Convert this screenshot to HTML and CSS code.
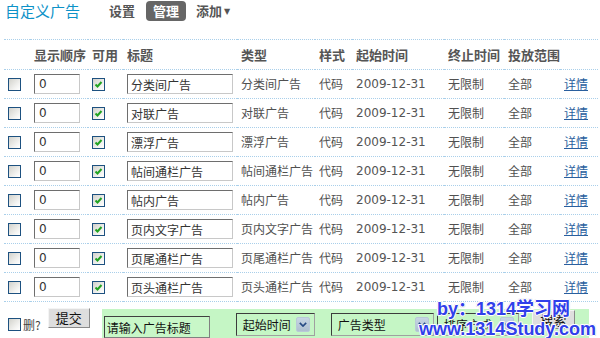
FILE: index.html
```html
<!DOCTYPE html>
<html lang="zh-CN">
<head>
<meta charset="utf-8">
<title>自定义广告</title>
<link rel="stylesheet" href="styles.css">
</head>
<body>
<div class="page">
  <div class="topbar">
    <h1 class="title">自定义广告</h1>
    <nav class="tabs">
      <a class="tab">设置</a>
      <a class="tab active">管理</a>
      <a class="tab">添加<span class="caret">▼</span></a>
    </nav>
  </div>

  <table class="grid">
    <colgroup>
      <col class="c1"><col class="c2"><col class="c3"><col class="c4"><col class="c5">
      <col class="c6"><col class="c7"><col class="c8"><col class="c9"><col class="c10">
    </colgroup>
    <thead>
      <tr><th></th><th>显示顺序</th><th>可用</th><th>标题</th><th>类型</th><th>样式</th><th>起始时间</th><th>终止时间</th><th>投放范围</th><th></th></tr>
    </thead>
    <tbody>
      <tr><td><span class="cb"></span></td><td><input class="num" value="0"></td><td><span class="cb on"><svg viewBox="0 0 11 11"><path d="M2.5 5.5 L4.5 7.5 L8.5 3"/></svg></span></td><td><input class="name" value="分类间广告"></td><td>分类间广告</td><td>代码</td><td class="date">2009-12-31</td><td>无限制</td><td>全部</td><td><a class="more">详情</a></td></tr>
      <tr><td><span class="cb"></span></td><td><input class="num" value="0"></td><td><span class="cb on"><svg viewBox="0 0 11 11"><path d="M2.5 5.5 L4.5 7.5 L8.5 3"/></svg></span></td><td><input class="name" value="对联广告"></td><td>对联广告</td><td>代码</td><td class="date">2009-12-31</td><td>无限制</td><td>全部</td><td><a class="more">详情</a></td></tr>
      <tr><td><span class="cb"></span></td><td><input class="num" value="0"></td><td><span class="cb on"><svg viewBox="0 0 11 11"><path d="M2.5 5.5 L4.5 7.5 L8.5 3"/></svg></span></td><td><input class="name" value="漂浮广告"></td><td>漂浮广告</td><td>代码</td><td class="date">2009-12-31</td><td>无限制</td><td>全部</td><td><a class="more">详情</a></td></tr>
      <tr><td><span class="cb"></span></td><td><input class="num" value="0"></td><td><span class="cb on"><svg viewBox="0 0 11 11"><path d="M2.5 5.5 L4.5 7.5 L8.5 3"/></svg></span></td><td><input class="name" value="帖间通栏广告"></td><td>帖间通栏广告</td><td>代码</td><td class="date">2009-12-31</td><td>无限制</td><td>全部</td><td><a class="more">详情</a></td></tr>
      <tr><td><span class="cb"></span></td><td><input class="num" value="0"></td><td><span class="cb on"><svg viewBox="0 0 11 11"><path d="M2.5 5.5 L4.5 7.5 L8.5 3"/></svg></span></td><td><input class="name" value="帖内广告"></td><td>帖内广告</td><td>代码</td><td class="date">2009-12-31</td><td>无限制</td><td>全部</td><td><a class="more">详情</a></td></tr>
      <tr><td><span class="cb"></span></td><td><input class="num" value="0"></td><td><span class="cb on"><svg viewBox="0 0 11 11"><path d="M2.5 5.5 L4.5 7.5 L8.5 3"/></svg></span></td><td><input class="name" value="页内文字广告"></td><td>页内文字广告</td><td>代码</td><td class="date">2009-12-31</td><td>无限制</td><td>全部</td><td><a class="more">详情</a></td></tr>
      <tr><td><span class="cb"></span></td><td><input class="num" value="0"></td><td><span class="cb on"><svg viewBox="0 0 11 11"><path d="M2.5 5.5 L4.5 7.5 L8.5 3"/></svg></span></td><td><input class="name" value="页尾通栏广告"></td><td>页尾通栏广告</td><td>代码</td><td class="date">2009-12-31</td><td>无限制</td><td>全部</td><td><a class="more">详情</a></td></tr>
      <tr><td><span class="cb"></span></td><td><input class="num" value="0"></td><td><span class="cb on"><svg viewBox="0 0 11 11"><path d="M2.5 5.5 L4.5 7.5 L8.5 3"/></svg></span></td><td><input class="name" value="页头通栏广告"></td><td>页头通栏广告</td><td>代码</td><td class="date">2009-12-31</td><td>无限制</td><td>全部</td><td><a class="more">详情</a></td></tr>
    </tbody>
  </table>

  <div class="footer">
    <label class="del"><span class="cb"></span>删?</label>
    <button class="btn submit">提交</button>
    <div class="search">
      <input class="kw" value="请输入广告标题">
      <div class="sel s1"><span>起始时间</span><i class="drop"><svg viewBox="0 0 10 6"><path d="M1 1 L5 5 L9 1"/></svg></i></div>
      <div class="sel s2"><span>广告类型</span><i class="drop"><svg viewBox="0 0 10 6"><path d="M1 1 L5 5 L9 1"/></svg></i></div>
      <div class="sel s3"><span>排序方式</span><i class="drop"><svg viewBox="0 0 10 6"><path d="M1 1 L5 5 L9 1"/></svg></i></div>
      <button class="btn find">搜索</button>
    </div>
  </div>

  <div class="watermark">
    <div class="wm1">by：1314学习网</div>
    <div class="wm2">www.1314Study.com</div>
  </div>
</div>
</body>
</html>
```

FILE: styles.css
```css
* { box-sizing: border-box; }
html, body { margin: 0; padding: 0; background: #fff; }
body {
  width: 600px;
  height: 338px;
  overflow: hidden;
  font-family: "DejaVu Sans", "Noto Sans CJK SC", sans-serif;
  font-size: 12px;
  color: #4a4a4a;
}
.page { position: relative; height: 338px; padding: 0 2px 0 4px; }

/* top bar */
.topbar { display: flex; align-items: center; height: 22px; margin-bottom: 17px; }
.title {
  margin: 0 0 0 1px;
  font: normal 15px/22px "Noto Sans CJK SC", sans-serif;
  color: #0d92c8;
}
.tabs { display: flex; align-items: center; margin-left: 29px; }
.tab { font: bold 13px/20px "Noto Sans CJK SC", sans-serif; color: #555; }
.tab.active { background: #666; color: #fff; border-radius: 4px; padding: 0 7px; margin: 0 10px 0 11px; }
.caret { font-size: 8px; margin-left: 2px; vertical-align: 2px; font-family: "DejaVu Sans", sans-serif; }

/* table */
.grid { width: 594px; border-collapse: separate; border-spacing: 0; table-layout: fixed; }
.c1 { width: 26px; } .c2 { width: 58px; } .c3 { width: 35px; } .c4 { width: 114px; } .c5 { width: 78px; }
.c6 { width: 37px; } .c7 { width: 92px; } .c8 { width: 60px; } .c9 { width: 56px; } .c10 { width: 38px; }
.grid th, .grid td { padding: 0 0 0 4px; text-align: left; white-space: nowrap; overflow: hidden; vertical-align: middle; }
.grid th {
  height: 31px;
  border-top: 1px dotted #a9cfea;
  border-bottom: 1px dotted #a9cfea;
  font: bold 13px/16px "Noto Sans CJK SC", sans-serif;
  color: #555;
}
.grid td { height: 29px; border-bottom: 1px dotted #a9cfea; font-family: "Noto Sans CJK SC", sans-serif; line-height: 16px; color: #505050; }
.grid td.date { font-family: "DejaVu Sans", sans-serif; color: #555; }

.cb {
  display: block;
  width: 13px; height: 13px;
  margin-top: 1px;
  border: 1px solid #1d5180;
  background: linear-gradient(135deg, #d2d2cc 0%, #f4f4f2 70%, #ffffff 100%);
}
.cb svg { display: block; width: 11px; height: 11px; }
.cb svg path { fill: none; stroke: #21a321; stroke-width: 2; }

.num, .name, .kw {
  display: block;
  height: 20px;
  border: 1px solid;
  border-color: #6e6e6e #c8c8c8 #c8c8c8 #6e6e6e;
  background: #fff;
  font: 12px/16px "DejaVu Sans", "Noto Sans CJK SC", sans-serif;
  color: #333;
  padding: 0 3px;
  outline: none;
}
.num { width: 46px; padding-left: 4px; }
.name { width: 106px; font-family: "Noto Sans CJK SC", sans-serif; }
.more { color: #2a5f9e; text-decoration: underline; }

/* footer */
.footer { display: flex; align-items: flex-start; padding-left: 4px; }
.del { display: flex; align-items: center; gap: 2px; margin-top: 16px; font: 12px/13px "Noto Sans CJK SC", sans-serif; color: #444; }
.del .cb { margin-top: 0; }
.btn {
  border: 1px solid;
  border-color: #f4f4f4 #8a8a8a #8a8a8a #f4f4f4;
  background: #dedede;
  font: 13px/16px "Noto Sans CJK SC", sans-serif;
  color: #111;
  padding: 0;
}
.submit { width: 42px; height: 20px; margin: 6px 0 0 7px; }
.search {
  display: flex;
  align-items: flex-start;
  width: 487px;
  height: 40px;
  margin: 7px 0 0 12px;
  padding-left: 2px;
  background: #c5f6c5;
}
.kw {
  width: 106px; height: 22px; margin-top: 7px;
  background: #c8f7c8;
  border-color: #404040 #808080 #808080 #404040;
  color: #111;
  font-family: "Noto Sans CJK SC", sans-serif;
  padding-left: 2px;
}
.sel {
  display: flex; align-items: center; justify-content: space-between;
  height: 23px; margin-top: 4px;
  border: 1px solid;
  border-color: #3c3c3c #a0a0a0 #a0a0a0 #3c3c3c;
  padding: 0 4px 0 6px;
  font: 12px/16px "Noto Sans CJK SC", sans-serif;
  color: #111;
}
.s1 { width: 79px; margin-left: 26px; }
.s2 { width: 103px; margin-left: 16px; }
.s3 { width: 82px; margin-left: 3px; }
.drop {
  display: flex; align-items: center; justify-content: center;
  width: 14px; height: 15px;
  border-radius: 2px;
  background: linear-gradient(#c7d6e4, #aebfd0);
  border: 1px solid #b9c9d8;
}
.drop svg { width: 8px; height: 5px; display: block; }
.drop svg path { fill: none; stroke: #264a84; stroke-width: 2; }
.find { width: 43px; height: 19px; margin: 1px 0 0 13px; }

/* watermark overlay */
.watermark {
  position: absolute;
  left: 419px;
  top: 299px;
  font: bold 18px/20px "Liberation Sans", "Noto Sans CJK SC", sans-serif;
  color: #3040ea;
  text-shadow:
    1px 0 0 #fff, -1px 0 0 #fff, 0 1px 0 #fff, 0 -1px 0 #fff,
    1px 1px 0 #ddd, -1px -1px 0 #eee, 1px -1px 0 #eee, -1px 1px 0 #ddd;
  white-space: nowrap;
}
.wm1 { padding-left: 18px; }
```
